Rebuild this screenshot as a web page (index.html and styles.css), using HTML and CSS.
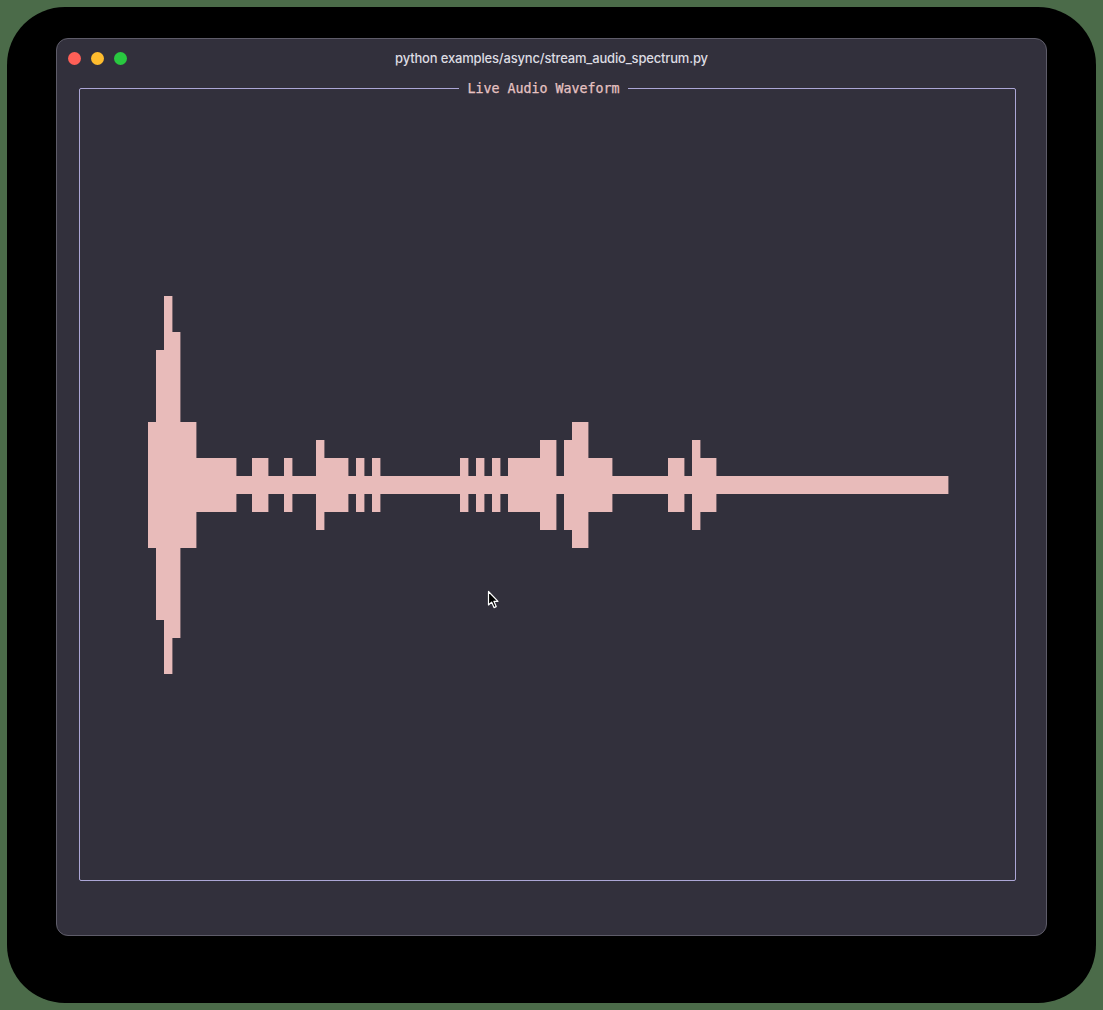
FILE: index.html
```html
<!DOCTYPE html>
<html>
<head>
<meta charset="utf-8">
<title>Live Audio Waveform</title>
<link rel="stylesheet" href="styles.css">
</head>
<body>
<div class="backdrop">
  <div class="window">
    <div class="titlebar">
      <div class="lights">
        <span class="light red"></span>
        <span class="light yellow"></span>
        <span class="light green"></span>
      </div>
      <div class="title">python examples/async/stream_audio_spectrum.py</div>
    </div>
    <div class="panel">
      <div class="panel-title">Live Audio Waveform</div>
      <svg class="wave" id="wave" width="935" height="791" viewBox="0 0 935 791"></svg>
    </div>
    <svg class="cursor" width="14" height="20" viewBox="0 0 14 20">
      <path d="M1.5 1.5 L1.5 15 L4.6 12.1 L7 17.6 L9.2 16.6 L6.9 11.3 L11 11.3 Z" fill="#000" stroke="#fff" stroke-width="1.2" stroke-linejoin="round"/>
    </svg>
  </div>
</div>
<script src="script.js"></script>
</body>
</html>
```

FILE: styles.css
```css
html, body {
  margin: 0;
  padding: 0;
  background: #4b6b49;
}
body {
  width: 1103px;
  height: 1010px;
  overflow: hidden;
}
.backdrop {
  margin: 7px;
  height: 996px;
  background: #000;
  border-radius: 58px;
  padding: 31px 0 0 49px;
  box-sizing: border-box;
}
.window {
  position: relative;
  width: 991px;
  height: 898px;
  box-sizing: border-box;
  background: #32303c;
  border: 1px solid #5e5c69;
  border-radius: 12px;
  padding: 0 30px 0 22px;
}
.titlebar {
  position: relative;
  height: 49px;
  display: flex;
  align-items: flex-start;
}
.lights {
  display: flex;
  gap: 10px;
  padding-top: 13px;
  margin-left: -11px;
}
.light {
  width: 13px;
  height: 13px;
  border-radius: 50%;
  display: block;
}
.red { background: #fe5f57; }
.yellow { background: #febc2e; }
.green { background: #29c840; }
.title {
  position: absolute;
  left: 0;
  right: -8px;
  top: 11px;
  text-align: center;
  font-family: "Inter", "Open Sans", sans-serif;
  font-size: 13px;
  font-weight: 500;
  color: #dddce2;
  letter-spacing: -0.17px;
}
.panel {
  position: relative;
  width: 937px;
  height: 793px;
  box-sizing: border-box;
  border: 1px solid #aca6d6;
  border-radius: 2px;
}
.panel-title {
  position: absolute;
  top: -9px;
  left: -8px;
  right: 0;
  margin: 0 auto;
  width: max-content;
  padding: 0 8px;
  background: #32303c;
  font-family: "DejaVu Sans Mono", "Liberation Mono", monospace;
  font-size: 13.3px;
  font-weight: 500;
  line-height: 18px;
  color: #e6c2c2;
  -webkit-text-stroke: 0.25px #e6c2c2;
}
.wave {
  display: block;
}
.wave rect {
  fill: #e8bbba;
}
.cursor {
  position: absolute;
  left: 430px;
  top: 551px;
}
```

FILE: script.js
```js
(function () {
  var levels = [3,7,10,8,3,3,1,1,1,1,1,0,0,1,1,0,0,1,0,0,0,2,1,1,1,0,1,0,1,
    0,0,0,0,0,0,0,0,0,0,
    1,0,1,0,1,0,1,1,1,1,2,2,0,2,3,3,1,1,1,
    0,0,0,0,0,0,0,
    1,1,0,2,1,1];
  while (levels.length < 100) levels.push(0);
  var svg = document.getElementById('wave');
  var ns = 'http://www.w3.org/2000/svg';
  var cy = 396;
  for (var i = 0; i < levels.length; i++) {
    var h = 9 + 18 * levels[i];
    var r = document.createElementNS(ns, 'rect');
    r.setAttribute('x', 68 + 8 * i);
    r.setAttribute('y', cy - h);
    r.setAttribute('width', 8.4);
    r.setAttribute('height', 2 * h);
    svg.appendChild(r);
  }
})();
```
